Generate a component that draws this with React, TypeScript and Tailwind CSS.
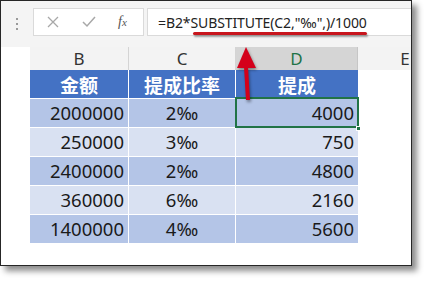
import React from "react";

// Excel-style formula demo: amount × per-mille commission
const rows = [
  { amount: "2000000", rate: "2‰", result: "4000" },
  { amount: "250000", rate: "3‰", result: "750" },
  { amount: "2400000", rate: "2‰", result: "4800" },
  { amount: "360000", rate: "6‰", result: "2160" },
  { amount: "1400000", rate: "4‰", result: "5600" },
];

const sans = { fontFamily: '"Noto Sans", "Noto Sans CJK SC", sans-serif' };
const cjk = { fontFamily: '"Noto Sans CJK SC", "Noto Sans", sans-serif' };

export default function App() {
  return (
    <div className="w-[436px] h-[288px] bg-white" style={sans}>
      <div className="relative w-[412px] h-[266px] border border-[#262626] bg-white overflow-hidden shadow-[5px_5px_6px_rgba(0,0,0,0.45)]">
        {/* Formula bar */}
        <div className="h-[46px] bg-[#f4f4f4] flex items-start pt-[7px]">
          <div className="w-[32px] shrink-0 flex flex-col items-center gap-[3px] pt-[10px]">
            <span className="block w-[2px] h-[2px] bg-[#9a9a9a]" />
            <span className="block w-[2px] h-[2px] bg-[#9a9a9a]" />
            <span className="block w-[2px] h-[2px] bg-[#9a9a9a]" />
          </div>
          <div className="w-[111px] shrink-0 h-[28px] bg-white border border-[#dadada] flex items-center">
            <svg width="12" height="12" viewBox="0 0 12 12" className="ml-[13px]">
              <path d="M1 1 L11 11 M11 1 L1 11" stroke="#a8a8a8" strokeWidth="1.3" fill="none" />
            </svg>
            <svg width="14" height="12" viewBox="0 0 14 12" className="ml-[23px]">
              <path d="M1 6 L5 10 L13 1" stroke="#a8a8a8" strokeWidth="1.5" fill="none" />
            </svg>
            <span
              className="ml-[22px] text-[14px] italic text-[#555] leading-none"
              style={{ fontFamily: '"Liberation Serif", serif' }}
            >
              f<span className="text-[11px]">x</span>
            </span>
          </div>
          <div className="ml-[3px] flex-1 h-[28px] bg-white border border-r-0 border-[#dadada] flex items-center pl-[10px]">
            <span className="text-[14px] text-[#222] tracking-[-0.1px]">=B2*SUBSTITUTE(C2,"‰",)/1000</span>
          </div>
        </div>

        {/* Column letters */}
        <div className="flex h-[23px] text-[17px] text-[#333] leading-none">
          <div className="w-[29px] shrink-0 bg-white" />
          <div className="w-[99px] shrink-0 bg-[#f3f3f3] border-r border-[#d4d4d4] flex items-center justify-center">B</div>
          <div className="w-[107px] shrink-0 bg-[#f3f3f3] border-r border-[#d4d4d4] flex items-center justify-center">C</div>
          <div className="w-[122px] shrink-0 bg-[#d5d5d5] border-r border-[#c6c6c6] flex items-center justify-center text-[#217346]">D</div>
          <div className="w-[94px] shrink-0 bg-[#f3f3f3] flex items-center justify-center">E</div>
        </div>

        {/* Table */}
        <div className="ml-[29px] w-[328px]">
          <div className="flex h-[28px] bg-[#4472c4] text-white text-[19px] font-bold leading-none" style={cjk}>
            <div className="w-[99px] border-r border-white flex items-center justify-center">金额</div>
            <div className="w-[107px] border-r border-white flex items-center justify-center">提成比率</div>
            <div className="w-[122px] flex items-center justify-center">提成</div>
          </div>
          {rows.map((r, i) => (
            <div
              key={i}
              className={`flex h-[29px] text-[18.5px] text-[#1a1a1a] leading-none border-t border-white ${
                i % 2 === 0 ? "bg-[#b4c5e7]" : "bg-[#d9e1f2]"
              }`}
            >
              <div className="w-[99px] border-r border-white flex items-center justify-end pr-[4px]">{r.amount}</div>
              <div className="w-[107px] border-r border-white flex items-center justify-center">{r.rate}</div>
              <div className="relative w-[122px] flex items-center justify-end pr-[4px]">
                {r.result}
                {i === 0 && (
                  <>
                    <div className="absolute -inset-x-[1px] -top-[2px] -bottom-[1px] border-2 border-[#217346]" />
                    <div className="absolute -right-[3px] -bottom-[4px] w-[5px] h-[5px] bg-[#217346] border border-white" />
                  </>
                )}
              </div>
            </div>
          ))}
        </div>

        {/* Red underline under the formula */}
        <div className="absolute left-[192px] top-[31px] w-[174px] h-[3px] bg-[#c8161d] rounded-full shadow-[1px_2px_2px_rgba(0,0,0,0.35)]" />

        {/* Red arrow pointing to the formula */}
        <svg
          className="absolute left-[233px] top-[45px]"
          width="26"
          height="56"
          viewBox="0 0 26 56"
          style={{ filter: "drop-shadow(1px 2px 1.5px rgba(0,0,0,0.4))" }}
        >
          <path d="M12 1 L3 22 L22 22 Z" fill="#d4001a" />
          <path d="M12 21 L14 54" stroke="#d4001a" strokeWidth="4" />
        </svg>
      </div>
    </div>
  );
}
